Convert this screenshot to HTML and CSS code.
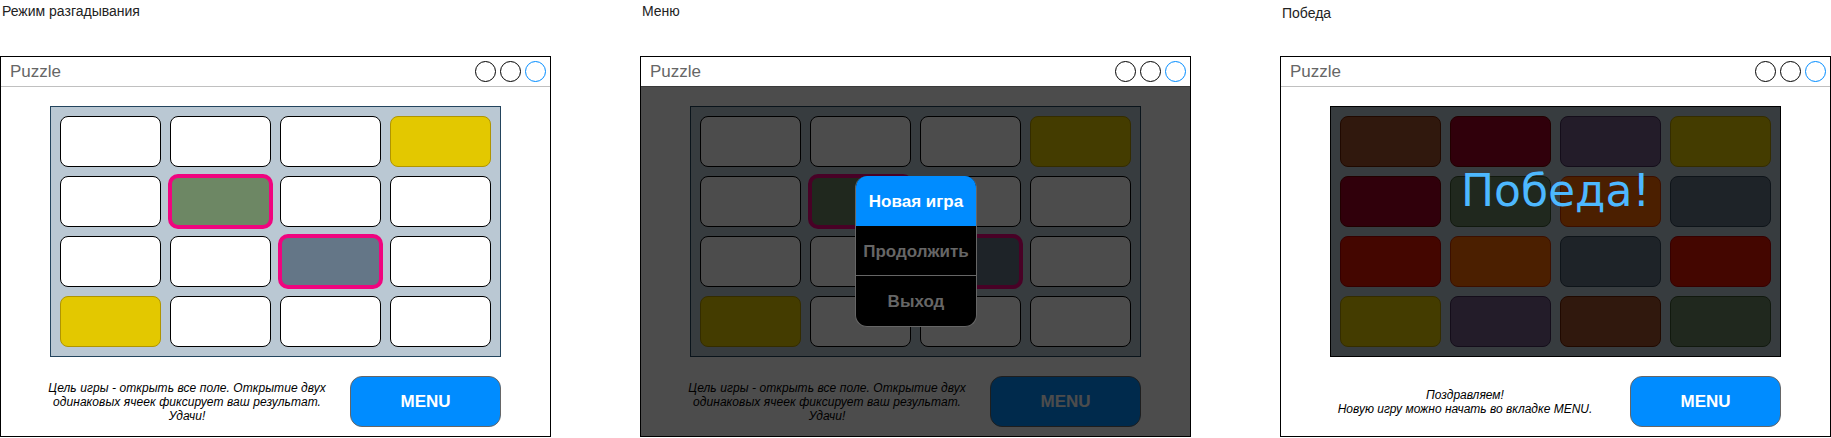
FILE: index.html
```html
<!DOCTYPE html>
<html lang="ru">
<head>
<meta charset="utf-8">
<title>Puzzle</title>
<link rel="stylesheet" href="styles.css">
</head>
<body>
<main class="board">
  <section class="mode">
    <div class="label">Режим разгадывания</div>
    <div class="window">
      <header class="titlebar">
        <span class="title">Puzzle</span>
        <span class="controls"><i class="dot"></i><i class="dot"></i><i class="dot dot-blue"></i></span>
      </header>
      <div class="body">
        <div class="grid">
          <div class="cell"></div><div class="cell"></div><div class="cell"></div><div class="cell yellow"></div>
          <div class="cell"></div><div class="cell green sel"></div><div class="cell"></div><div class="cell"></div>
          <div class="cell"></div><div class="cell"></div><div class="cell slate sel"></div><div class="cell"></div>
          <div class="cell yellow"></div><div class="cell"></div><div class="cell"></div><div class="cell"></div>
        </div>
        <div class="footer">
          <p class="note note-long">Цель игры - открыть все поле. Открытие двух<br>одинаковых ячеек фиксирует ваш результат.<br>Удачи!</p>
          <button class="menu-btn">MENU</button>
        </div>
      </div>
    </div>
  </section>

  <section class="mode">
    <div class="label">Меню</div>
    <div class="window">
      <header class="titlebar">
        <span class="title">Puzzle</span>
        <span class="controls"><i class="dot"></i><i class="dot"></i><i class="dot dot-blue"></i></span>
      </header>
      <div class="body">
        <div class="grid">
          <div class="cell"></div><div class="cell"></div><div class="cell"></div><div class="cell yellow"></div>
          <div class="cell"></div><div class="cell green sel"></div><div class="cell"></div><div class="cell"></div>
          <div class="cell"></div><div class="cell"></div><div class="cell slate sel"></div><div class="cell"></div>
          <div class="cell yellow"></div><div class="cell"></div><div class="cell"></div><div class="cell"></div>
        </div>
        <div class="footer">
          <p class="note note-long">Цель игры - открыть все поле. Открытие двух<br>одинаковых ячеек фиксирует ваш результат.<br>Удачи!</p>
          <button class="menu-btn">MENU</button>
        </div>
      </div>
      <div class="dim"></div>
      <nav class="popup">
        <div class="popup-item active">Новая игра</div>
        <div class="popup-item">Продолжить</div>
        <div class="popup-item">Выход</div>
      </nav>
    </div>
  </section>

  <section class="mode">
    <div class="label label-low">Победа</div>
    <div class="window">
      <header class="titlebar">
        <span class="title">Puzzle</span>
        <span class="controls"><i class="dot"></i><i class="dot"></i><i class="dot dot-blue"></i></span>
      </header>
      <div class="body">
        <div class="grid">
          <div class="cell brown"></div><div class="cell maroon"></div><div class="cell purple"></div><div class="cell yellow"></div>
          <div class="cell maroon"></div><div class="cell green"></div><div class="cell orange"></div><div class="cell slate"></div>
          <div class="cell red"></div><div class="cell orange"></div><div class="cell slate"></div><div class="cell red"></div>
          <div class="cell yellow"></div><div class="cell purple"></div><div class="cell brown"></div><div class="cell green"></div>
          <div class="grid-dim">Победа!</div>
        </div>
        <div class="footer">
          <p class="note">Поздравляем!<br>Новую игру можно начать во вкладке MENU.</p>
          <button class="menu-btn">MENU</button>
        </div>
      </div>
    </div>
  </section>
</main>
</body>
</html>
```

FILE: styles.css
```css
* {
  box-sizing: border-box;
}

html,
body {
  margin: 0;
  padding: 0;
  background: #fff;
  overflow: hidden;
}

body {
  font-family: "Liberation Sans", Arial, sans-serif;
  color: #000;
}

.board {
  display: flex;
  gap: 89px;
}

.mode {
  width: 551px;
  flex: none;
}

.label {
  height: 56px;
  padding: 3px 0 0 2px;
  font-size: 14px;
  line-height: 16px;
  color: #222;
}

.label-low {
  padding-top: 5px;
}

.window {
  position: relative;
  height: 381px;
  border: 1px solid #000;
  background: #fff;
}

.titlebar {
  display: flex;
  align-items: center;
  justify-content: space-between;
  height: 30px;
  padding: 0 4px 1px 9px;
  border-bottom: 1px solid #c0c0c0;
}

.title {
  position: relative;
  top: 1px;
  font-size: 17px;
  color: #666;
}

.controls {
  display: flex;
  gap: 4px;
}

.dot {
  display: block;
  width: 21px;
  height: 21px;
  border: 1px solid #000;
  border-radius: 50%;
}

.dot-blue {
  border-color: #008cff;
}

.body {
  padding: 19px 50px 0 49px;
}

.grid {
  position: relative;
  display: grid;
  grid-template-columns: repeat(4, 101px);
  grid-auto-rows: 51px;
  gap: 9px;
  width: 451px;
  height: 251px;
  padding: 9px;
  border: 1px solid #23445d;
  background: #bac8d3;
}

.cell {
  border: 1px solid #000;
  border-radius: 8px;
  background: #fff;
}

.yellow { background: #e3c800; border-color: #b09500; }
.green  { background: #6d8764; border-color: #3a5431; }
.slate  { background: #647687; border-color: #314354; }
.brown  { background: #a0522d; border-color: #6d1f00; }
.maroon { background: #a20025; border-color: #6f0000; }
.purple { background: #76608a; border-color: #432d57; }
.orange { background: #fa6800; border-color: #c73500; }
.red    { background: #e51400; border-color: #b20000; }

.cell.sel {
  margin: -2px;
  border: 4px solid #f0047f;
  border-radius: 10px;
}

.footer {
  display: flex;
  align-items: center;
  justify-content: space-between;
  width: 461px;
  margin: 19px 0 0 -10px;
}

.note {
  width: 290px;
  margin: 0;
  font-size: 12px;
  font-style: italic;
  line-height: 14px;
  text-align: center;
  white-space: nowrap;
}

.note-long {
  padding-left: 4px;
  letter-spacing: 0.07px;
}

.menu-btn {
  width: 151px;
  height: 51px;
  padding: 0;
  border: 1px solid #666;
  border-radius: 12px;
  background: #008cff;
  color: #fff;
  font-family: inherit;
  font-size: 17px;
  font-weight: 700;
}

.dim {
  position: absolute;
  top: 29px;
  right: 0;
  bottom: 0;
  left: 0;
  background: rgba(0, 0, 0, 0.7);
}

.popup {
  position: absolute;
  top: 119px;
  left: 214px;
  width: 122px;
  height: 151px;
  overflow: hidden;
  border-radius: 12px;
  background: #000;
  border: 1px solid #666;
  border-top: 0;
}

.popup-item {
  display: flex;
  align-items: center;
  justify-content: center;
  height: 50px;
  padding-top: 2px;
  border-bottom: 1px solid #666;
  font-size: 17px;
  font-weight: 700;
  color: #666;
}

.popup-item:last-child {
  border-bottom: 0;
}

.popup-item.active {
  margin: 0 -1px;
  border-bottom: 0;
  background: #008cff;
  color: #fff;
}

.grid-dim {
  position: absolute;
  top: -1px;
  right: -1px;
  bottom: -1px;
  left: -1px;
  padding-top: 58px;
  background: rgba(0, 0, 0, 0.7);
  border: 1px solid #000;
  color: #4db8ff;
  font-family: "DejaVu Sans", Verdana, sans-serif;
  font-size: 44px;
  line-height: 52px;
  text-align: center;
}
```
